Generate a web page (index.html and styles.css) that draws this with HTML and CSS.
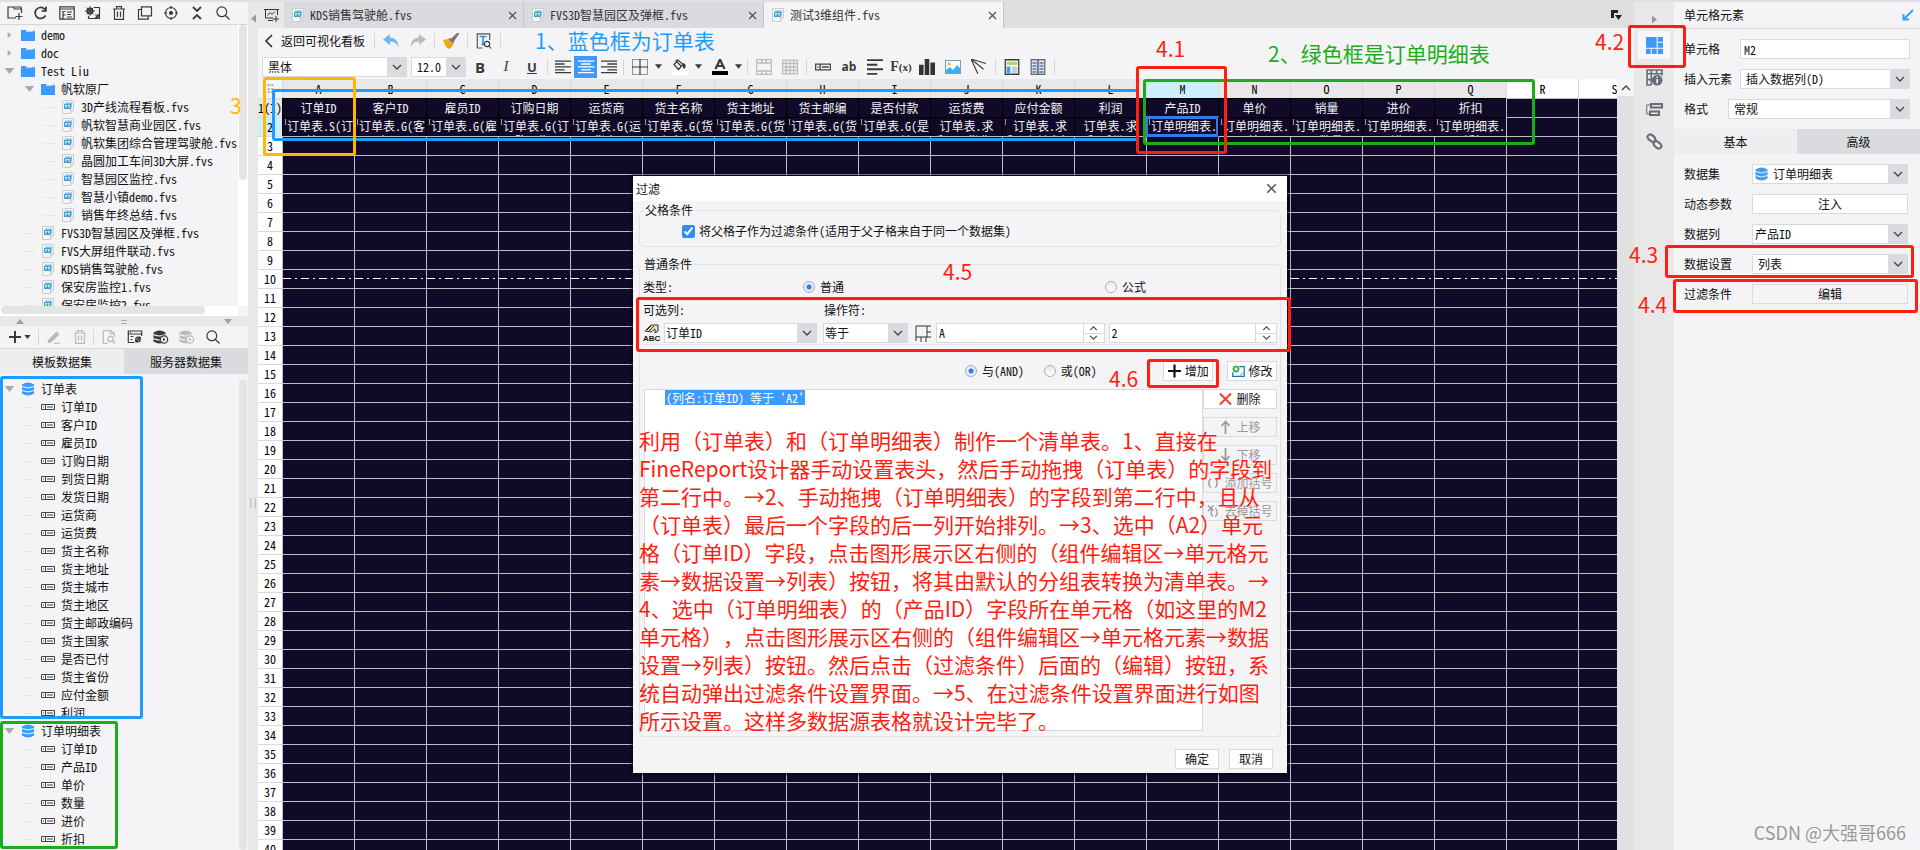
FILE: index.html
```html
<!DOCTYPE html>
<html lang="zh-CN">
<head>
<meta charset="utf-8">
<title>测试3维组件.fvs</title>
<link rel="stylesheet" href="styles.css">
</head>
<body>
<svg class="sprite" aria-hidden="true">
  <symbol id="folder" viewBox="0 0 14 12"><path d="M0 1h5l1 1h8v10H0z" fill="#3d9bff"/><path d="M5 2.5q3 1 9-1" stroke="#bfe0ff" fill="none"/></symbol>
  <symbol id="file" viewBox="0 0 12 14"><path d="M.5.5h11v9l-3 4h-8z" fill="#f4f6f8" stroke="#c9ccd1"/><path d="M11.500 9.500h-3v4" fill="#dfe2e6" stroke="#c9ccd1"/><path d="M3 2.500h7v5H3z" fill="#7cc0ec"/><path d="M2 4h7v5H2z" fill="#3f9fdf"/><path d="M3 5h5v3H3z" fill="#cfeee0"/><path d="M4 8V6.500M5.500 8V5.500M7 8V6.500" stroke="#2aa36a"/></symbol>
  <symbol id="db" viewBox="0 0 13 14"><path d="M.5 2.500Q6.500-1.500 12.500 2.500v9Q6.500 15.500.5 11.500z" fill="#3d9bff"/><path d="M.5 4.500q6 3 12 0M.5 8.500q6 3 12 0" stroke="#f4f4f6" fill="none"/></symbol>
  <symbol id="field" viewBox="0 0 14 6"><path d="M.5.5h13v5H.5zM4.500.5v5M6 3h6M2 3h1" stroke="#444" fill="none"/></symbol>
  <symbol id="down" viewBox="0 0 8 5"><path d="M0 0h8L4 5z"/></symbol>
  <symbol id="right" viewBox="0 0 5 8"><path d="M0 0v8l5-4z"/></symbol>
  <symbol id="chev" viewBox="0 0 10 6"><path d="M1 1l4 4 4-4" fill="none" stroke="#444" stroke-width="1.300"/></symbol>
  <symbol id="chevup" viewBox="0 0 10 6"><path d="M1 5l4-4 4 4" fill="none" stroke="#444" stroke-width="1.300"/></symbol>
  <symbol id="close" viewBox="0 0 9 9"><path d="M1 1l7 7M8 1L1 8" fill="none" stroke="#555" stroke-width="1.300"/></symbol>
  <symbol id="newfolder" viewBox="0 0 16 14"><path d="M9 12H1V1h5l1.500 2H11M7.500 3H14.500v4M5 1h9v2M12 7v7M8.500 10.500h7"/></symbol>
  <symbol id="refresh" viewBox="0 0 16 14"><path d="M12.500 9.500A5.500 5.500 0 1 1 11 2.600l1.500 1.500M13 .5v4.500H8.500" stroke-width="1.700"/></symbol>
  <symbol id="rename" viewBox="0 0 16 14"><path d="M.8.8h14.400v12.400H.8zM.8 3h14.400M4 5v8M4 5.500h2.500M4 9h2.500M8 6h5M8 8.500h4M8 11h5"/></symbol>
  <symbol id="gearfile" viewBox="0 0 16 14"><path d="M9 1.500h5.500v11h-11V10M10 12.500l4-4M10 9h3v3"/><circle cx="5" cy="5" r="2.600" stroke-width="2"/><path d="M5 0v10M0 5h10M1.500 1.500l7 7M8.500 1.500l-7 7" stroke-width=".9"/></symbol>
  <symbol id="trash" viewBox="0 0 14 14"><path d="M1 3h12M4.500 3V.7h5V3M2.500 3v10.300h9V3M5.500 5.500v5.500M8.500 5.500v5.500"/></symbol>
  <symbol id="copy" viewBox="0 0 16 14"><path d="M4.500.8h10v9h-10zM4.500 3.500h-3v9.700h9.700V10"/></symbol>
  <symbol id="target" viewBox="0 0 14 14"><circle cx="7" cy="7" r="5.500"/><circle cx="7" cy="7" r="1.500" fill="currentColor"/><path d="M7 0v3M7 11v3M0 7h3M11 7h3"/></symbol>
  <symbol id="collapse" viewBox="0 0 12 14"><path d="M2 1l4 4 4-4M2 13l4-4 4 4" stroke-width="1.800"/></symbol>
  <symbol id="search" viewBox="0 0 14 14"><circle cx="5.800" cy="5.800" r="4.900"/><path d="M9.500 9.500l4 4"/></symbol>
  <symbol id="plus" viewBox="0 0 12 12"><path d="M6 0v12M0 6h12" stroke-width="2"/></symbol>
  <symbol id="pencil" viewBox="0 0 14 14"><path d="M1 10L9.500 1.500l3 3L4 12.500l-3.500.8z" fill="currentColor" stroke="none"/><path d="M7 13.300h6"/></symbol>
  <symbol id="preview" viewBox="0 0 13 14"><path d="M5 13.300H.8V.7h7.500l3.700 3v3M8 .7V4h4"/><circle cx="8" cy="9" r="2.700"/><path d="M10 11l2.500 2.500"/></symbol>
  <symbol id="sqledit" viewBox="0 0 15 14"><path d="M7 12.500H.8V1h13.400v5M.8 4h13.400M3 6.500h3M3 9.500h2M2.500 2.500h1"/><circle cx="10.500" cy="9.500" r="2.300"/><path d="M8 12l5-5" stroke-width="2"/></symbol>
  <symbol id="dbplay" viewBox="0 0 15 14"><path d="M0 2.500Q6-1.500 12 2.500v9Q6 15.500 0 11.500z" fill="currentColor" stroke="none"/><path d="M0 4.500q6 3 12 0M0 8.500q6 3 12 0" stroke="#f4f4f6"/><circle cx="10.500" cy="9.500" r="3.700" fill="#f4f4f6"/><path d="M9.500 7.800v3.400l2.500-1.700z" fill="currentColor" stroke="none"/></symbol>
  <symbol id="newtab" viewBox="0 0 15 14"><path d="M9 10H1.500V1.500h12V7M0 1.500h15M3.500 7.500l2.500-3 2 2 3-3M4 12.500h5M12 8v6M9 11h6"/></symbol>
  <symbol id="undo" viewBox="0 0 16 14"><path d="M7 0L0 5.500 7 11V7.500q6-.5 8.500 6Q15.500 4 7 3.500z" fill="currentColor" stroke="none"/></symbol>
  <symbol id="brush" viewBox="0 0 16 16"><path d="M15.500 0L9 6l1.500 1.500z" stroke="#777" stroke-width="2"/><path d="M7 5l4 4-1 2-5-5z" fill="#777" stroke="none"/><path d="M5 6l5.500 5.500q-2 4-5.500 4.500Q1 12 0 7z" fill="#f5a817" stroke="none"/></symbol>
  <symbol id="textfind" viewBox="0 0 15 16"><path d="M6 15H.8V.8h12.400V7" stroke="#555"/><path d="M3 3.500h7M6.500 3.500v8M5 11.500h3" stroke="#2f8df0" stroke-width="1.600"/><circle cx="10.500" cy="11" r="2.700"/><path d="M12.500 13l2 2.500"/></symbol>
  <symbol id="al" viewBox="0 0 15 13"><path d="M0 1h15M0 3.700h9M0 6.400h15M0 9.100h9M0 11.800h15"/></symbol>
  <symbol id="ac" viewBox="0 0 15 13"><path d="M0 1h15M3 3.700h9M0 6.400h15M3 9.100h9M0 11.800h15"/></symbol>
  <symbol id="ar" viewBox="0 0 15 13"><path d="M0 1h15M6 3.700h9M0 6.400h15M6 9.100h9M0 11.800h15"/></symbol>
  <symbol id="border" viewBox="0 0 16 16"><path d="M.5.5h15v15H.5z" stroke-dasharray="1 1"/><path d="M8 0v16M0 8h16"/></symbol>
  <symbol id="fill" viewBox="0 0 16 16"><path d="M2 5.500l4-4.500 5 4.500-4.500 5zM5 4V.5M3.500 1.500L9 7"/><path d="M11 4q3 .5 2.500 4.500-1.500 2-2.500 0z" fill="#333" stroke="none"/><path d="M0 12h16v4H0z" fill="#fff" stroke="none"/></symbol>
  <symbol id="fontcolor" viewBox="0 0 16 16"><path d="M3.500 10L8 .5 12.500 10M5 7h6" stroke-width="2.200"/><path d="M0 12h16v4H0z" fill="#000" stroke="none"/></symbol>
  <symbol id="merge" viewBox="0 0 14 14"><path d="M.5.5h13v13H.5zM.5 3.500h13M.5 10.500h13M5 .5v3M9 .5v3M5 10.500v3M9 10.500v3"/></symbol>
  <symbol id="grid-icon" viewBox="0 0 15 14"><path d="M.5.5h14v13H.5zM.5 3.700h14M.5 7h14M.5 10.200h14M4 .5v13M7.500.5v13M11 .5v13"/></symbol>
  <symbol id="para" viewBox="0 0 14 14"><path d="M0 1h14M0 5h9M0 9h14M0 13h9" stroke-width="1.700"/></symbol>
  <symbol id="chart" viewBox="0 0 14 14"><path d="M0 5h4v9H0zM5 0h4v14H5zM10 3h4v11h-4z" fill="#333" stroke="none"/></symbol>
  <symbol id="image" viewBox="0 0 16 14"><path d="M.5.5h15v13H.5z" fill="#fff" stroke="#7a9cb5"/><path d="M1 13V10l4-3 3 3 4-5 3 3v5z" fill="#36b3ee" stroke="none"/><circle cx="4" cy="4" r="1.700" fill="#f5b83d" stroke="none"/></symbol>
  <symbol id="slash" viewBox="0 0 14 14"><path d="M0 0l13 4M0 0l11 9M0 0l6 13" stroke-width="1"/></symbol>
  <symbol id="report" viewBox="0 0 14 15"><path d="M.7.700h12.600v13.600H.7z" fill="#fff"/><path d="M2 2.500h10v3H2z" fill="#a5d86e" stroke="none"/><path d="M2 7h3.500v6H2z" fill="#3d9bff" stroke="none"/><path d="M7 7h5v6H7z" fill="#ccc" stroke="none"/></symbol>
  <symbol id="book" viewBox="0 0 15 16"><path d="M.7.700h13.600v14.600H.7z" fill="#cfe2f8" stroke="#667"/><path d="M7.500 1v14M2 4h4M2 7h4M2 10h4M2 13h4M9 4h4M9 7h4M9 10h4M9 13h4" stroke="#445"/></symbol>
  <symbol id="cells" viewBox="0 0 16 16"><path d="M0 0h10v10H0zM11 0h5v4.500h-5zM11 5.500h5V10h-5zM0 11h4.500v5H0zM5.500 11H10v5H5.500zM11 11h5v5h-5z" fill="#3d9bff" stroke="none"/></symbol>
  <symbol id="cellinfo" viewBox="0 0 16 16"><path d="M5 15H1V1h14v5M1 4.500h14M5 1v14M10 1v4M1 10h5" stroke-width="1.500"/><circle cx="10.500" cy="10.500" r="5" fill="#666c75" stroke="none"/><path d="M10.500 9.500v4M10.500 7v1.300" stroke="#fff" stroke-width="1.500"/></symbol>
  <symbol id="tree" viewBox="0 0 17 13"><path d="M4 2H.7v9H3" stroke-width="1"/><path d="M5 1h11v3.500H5zM4 8.500h9V12H4z" stroke-width="2"/></symbol>
  <symbol id="link" viewBox="0 0 16 16"><path d="M7 9L2.500 6Q0 3 3 1.500 5 .5 8 4q1.500 2 0 4M9 7l4.500 3q2.500 3-.5 4.500-2 1-5-2.500-1.500-2 0-4" stroke-width="2"/></symbol>
  <symbol id="abc" viewBox="0 0 20 20"><path d="M2 8l6-6h7v6l-3 2V6L8 9z" fill="#e9dfb8" stroke="#333"/><path d="M4 7l4-4M6 8l5-5" stroke="#333"/><text x="0" y="18" font-size="8" font-weight="700" fill="#111" stroke="none">ABC</text></symbol>
  <symbol id="cellpos" viewBox="0 0 17 17"><path d="M1 16V1h15M1 12h15M12 1v11M6 12v5M11 12v5M12 7h4"/></symbol>
  <symbol id="greengear" viewBox="0 0 16 15"><path d="M9 2h6v12H1V9" stroke="#1d6fb5" stroke-width="1.500"/><path d="M10 13l4-4" stroke="#1d6fb5"/><circle cx="5" cy="5" r="2.800" stroke="#3dba4e" stroke-width="2.200"/><path d="M5 0v10M0 5h10M1.500 1.500l7 7M8.500 1.500l-7 7" stroke="#3dba4e"/><circle cx="5" cy="5" r="1.500" fill="#fff" stroke="none"/></symbol>
  <symbol id="redx" viewBox="0 0 14 14"><path d="M1 1l12 12M13 1L1 13" stroke="#e8453c" stroke-width="2.300"/></symbol>
  <symbol id="arrup" viewBox="0 0 12 14"><path d="M6 14V2M2 6l4-4.500L10 6" stroke-width="1.800"/></symbol>
  <symbol id="arrdown" viewBox="0 0 12 14"><path d="M6 0v12M2 8l4 4.500L10 8" stroke-width="1.800"/></symbol>
  <symbol id="paren" viewBox="0 0 14 12"><path d="M4 1Q0 6 4 11M9 1q4 5 0 10" stroke-width="1.500"/></symbol>
  <symbol id="unparen" viewBox="0 0 14 14"><path d="M6 4q-3 5 0 9M9 4q4 5 0 9M1 1l6 6M7 1L1 7" stroke-width="1.400"/></symbol>
  <symbol id="popout" viewBox="0 0 11 11"><path d="M0 0h7v3H3v5H0z" fill="#222" stroke="none"/><path d="M4 5h7l-3.500 5z" fill="#222" stroke="none"/></symbol>
</svg>

<div class="app">
  <aside class="left">
    <div class="bar">
      <button class="tool" aria-label="新建文件夹"><svg><use href="#newfolder"/></svg></button>
      <button class="tool" aria-label="刷新"><svg><use href="#refresh"/></svg></button>
      <button class="tool" aria-label="重命名"><svg><use href="#rename"/></svg></button>
      <button class="tool" aria-label="设置"><svg><use href="#gearfile"/></svg></button>
      <button class="tool" aria-label="删除"><svg><use href="#trash"/></svg></button>
      <button class="tool" aria-label="复制"><svg><use href="#copy"/></svg></button>
      <button class="tool" aria-label="定位"><svg><use href="#target"/></svg></button>
      <button class="tool" aria-label="收起"><svg><use href="#collapse"/></svg></button>
      <button class="tool" aria-label="搜索"><svg><use href="#search"/></svg></button>
    </div>
    <div class="scroller files">
      <ul class="tree">
        <li class="d0"><svg class="tw"><use href="#right"/></svg><svg class="ic"><use href="#folder"/></svg>demo</li>
        <li class="d0"><svg class="tw"><use href="#right"/></svg><svg class="ic"><use href="#folder"/></svg>doc</li>
        <li class="d0"><svg class="tw"><use href="#down"/></svg><svg class="ic"><use href="#folder"/></svg>Test Liu</li>
        <li class="d1"><svg class="tw"><use href="#down"/></svg><svg class="ic"><use href="#folder"/></svg>帆软原厂</li>
        <li class="d2"><i></i><svg class="ic"><use href="#file"/></svg>3D产线流程看板.fvs</li>
        <li class="d2"><i></i><svg class="ic"><use href="#file"/></svg>帆软智慧商业园区.fvs</li>
        <li class="d2"><i></i><svg class="ic"><use href="#file"/></svg>帆软集团综合管理驾驶舱.fvs</li>
        <li class="d2"><i></i><svg class="ic"><use href="#file"/></svg>晶圆加工车间3D大屏.fvs</li>
        <li class="d2"><i></i><svg class="ic"><use href="#file"/></svg>智慧园区监控.fvs</li>
        <li class="d2"><i></i><svg class="ic"><use href="#file"/></svg>智慧小镇demo.fvs</li>
        <li class="d2"><i></i><svg class="ic"><use href="#file"/></svg>销售年终总结.fvs</li>
        <li class="d1"><i></i><svg class="ic"><use href="#file"/></svg>FVS3D智慧园区及弹框.fvs</li>
        <li class="d1"><i></i><svg class="ic"><use href="#file"/></svg>FVS大屏组件联动.fvs</li>
        <li class="d1"><i></i><svg class="ic"><use href="#file"/></svg>KDS销售驾驶舱.fvs</li>
        <li class="d1"><i></i><svg class="ic"><use href="#file"/></svg>保安房监控1.fvs</li>
        <li class="d1"><i></i><svg class="ic"><use href="#file"/></svg>保安房监控2.fvs</li>
      </ul>
      <div class="vtrack"><div class="vthumb"></div></div>
    </div>
    <div class="htrack"><div class="hthumb"></div><div class="corner"></div></div>
    <div class="hsplit"><svg class="flip"><use href="#down"/></svg><span>=</span><svg><use href="#down"/></svg></div>
    <div class="bar data-bar">
      <button class="tool add" aria-label="新增"><svg class="plus"><use href="#plus"/></svg><svg class="caret"><use href="#down"/></svg></button>
      <span class="sep"></span>
      <button class="tool off" aria-label="编辑"><svg><use href="#pencil"/></svg></button>
      <button class="tool off" aria-label="删除"><svg><use href="#trash"/></svg></button>
      <span class="sep"></span>
      <button class="tool off" aria-label="预览"><svg><use href="#preview"/></svg></button>
      <button class="tool" aria-label="连接"><svg><use href="#sqledit"/></svg></button>
      <button class="tool" aria-label="运行"><svg><use href="#dbplay"/></svg></button>
      <button class="tool off" aria-label="停止"><svg><use href="#dbplay"/></svg></button>
      <button class="tool" aria-label="搜索"><svg><use href="#search"/></svg></button>
    </div>
    <div class="tabs2"><button class="on">模板数据集</button><button>服务器数据集</button></div>
    <div class="scroller data">
      <ul class="tree">
        <li class="d0"><svg class="tw"><use href="#down"/></svg><svg class="ic"><use href="#db"/></svg>订单表</li>
        <li class="d1"><i></i><svg class="ic"><use href="#field"/></svg>订单ID</li>
        <li class="d1"><i></i><svg class="ic"><use href="#field"/></svg>客户ID</li>
        <li class="d1"><i></i><svg class="ic"><use href="#field"/></svg>雇员ID</li>
        <li class="d1"><i></i><svg class="ic"><use href="#field"/></svg>订购日期</li>
        <li class="d1"><i></i><svg class="ic"><use href="#field"/></svg>到货日期</li>
        <li class="d1"><i></i><svg class="ic"><use href="#field"/></svg>发货日期</li>
        <li class="d1"><i></i><svg class="ic"><use href="#field"/></svg>运货商</li>
        <li class="d1"><i></i><svg class="ic"><use href="#field"/></svg>运货费</li>
        <li class="d1"><i></i><svg class="ic"><use href="#field"/></svg>货主名称</li>
        <li class="d1"><i></i><svg class="ic"><use href="#field"/></svg>货主地址</li>
        <li class="d1"><i></i><svg class="ic"><use href="#field"/></svg>货主城市</li>
        <li class="d1"><i></i><svg class="ic"><use href="#field"/></svg>货主地区</li>
        <li class="d1"><i></i><svg class="ic"><use href="#field"/></svg>货主邮政编码</li>
        <li class="d1"><i></i><svg class="ic"><use href="#field"/></svg>货主国家</li>
        <li class="d1"><i></i><svg class="ic"><use href="#field"/></svg>是否已付</li>
        <li class="d1"><i></i><svg class="ic"><use href="#field"/></svg>货主省份</li>
        <li class="d1"><i></i><svg class="ic"><use href="#field"/></svg>应付金额</li>
        <li class="d1"><i></i><svg class="ic"><use href="#field"/></svg>利润</li>
        <li class="d0"><svg class="tw"><use href="#down"/></svg><svg class="ic"><use href="#db"/></svg>订单明细表</li>
        <li class="d1"><i></i><svg class="ic"><use href="#field"/></svg>订单ID</li>
        <li class="d1"><i></i><svg class="ic"><use href="#field"/></svg>产品ID</li>
        <li class="d1"><i></i><svg class="ic"><use href="#field"/></svg>单价</li>
        <li class="d1"><i></i><svg class="ic"><use href="#field"/></svg>数量</li>
        <li class="d1"><i></i><svg class="ic"><use href="#field"/></svg>进价</li>
        <li class="d1"><i></i><svg class="ic"><use href="#field"/></svg>折扣</li>
      </ul>
      <div class="vtrack"><div class="vthumb"></div></div>
    </div>
  </aside>
  <div class="vsplit"><svg><use href="#right"/></svg><span>||</span></div>

  <main class="main">
    <div class="filetabs">
      <button class="newtab" aria-label="新建"><svg><use href="#newtab"/></svg></button>
      <div class="ftab"><svg class="ic"><use href="#file"/></svg><span>KDS销售驾驶舱.fvs</span><button aria-label="关闭"><svg><use href="#close"/></svg></button></div>
      <div class="ftab"><svg class="ic"><use href="#file"/></svg><span>FVS3D智慧园区及弹框.fvs</span><button aria-label="关闭"><svg><use href="#close"/></svg></button></div>
      <div class="ftab on"><svg class="ic"><use href="#file"/></svg><span>测试3维组件.fvs</span><button aria-label="关闭"><svg><use href="#close"/></svg></button></div>
      <svg class="popout"><use href="#popout"/></svg>
    </div>
    <div class="row1">
      <button class="back"><svg><path d="M7 1L1 7l6 6"/></svg>返回可视化看板</button>
      <span class="sep"></span>
      <button class="tool blue" aria-label="撤销"><svg><use href="#undo"/></svg></button>
      <button class="tool off mirror" aria-label="重做"><svg><use href="#undo"/></svg></button>
      <span class="sep"></span>
      <button class="tool" aria-label="格式刷"><svg><use href="#brush"/></svg></button>
      <span class="sep"></span>
      <button class="tool" aria-label="查找"><svg><use href="#textfind"/></svg></button>
      <span class="sep"></span>
    </div>
    <div class="row2">
      <div class="combo font"><select aria-label="字体"><option>黑体</option></select><span><svg><use href="#chev"/></svg></span></div>
      <div class="combo size"><select aria-label="字号"><option>12.0</option></select><span><svg><use href="#chev"/></svg></span></div>
      <button class="tool bold">B</button><button class="tool ital">I</button><button class="tool under">U</button>
      <span class="sep"></span>
      <button class="tool al" aria-label="左对齐"><svg><use href="#al"/></svg></button><button class="tool al on" aria-label="居中"><svg><use href="#ac"/></svg></button><button class="tool al" aria-label="右对齐"><svg><use href="#ar"/></svg></button>
      <span class="sep"></span>
      <button class="tool wide" aria-label="边框"><svg><use href="#border"/></svg><svg class="caret"><use href="#down"/></svg></button>
      <button class="tool wide" aria-label="填充"><svg><use href="#fill"/></svg><svg class="caret"><use href="#down"/></svg></button>
      <button class="tool wide" aria-label="字色"><svg><use href="#fontcolor"/></svg><svg class="caret"><use href="#down"/></svg></button>
      <span class="sep"></span>
      <button class="tool off" aria-label="合并"><svg><use href="#merge"/></svg></button><button class="tool off" aria-label="拆分"><svg><use href="#grid-icon"/></svg></button>
      <span class="sep"></span>
      <button class="tool" aria-label="数据列"><svg><use href="#field"/></svg></button><button class="tool ab">ab</button><button class="tool" aria-label="富文本"><svg><use href="#para"/></svg></button><button class="tool fx">F<small>(x)</small></button><button class="tool" aria-label="图表"><svg><use href="#chart"/></svg></button><button class="tool" aria-label="图片"><svg><use href="#image"/></svg></button><button class="tool" aria-label="斜线"><svg><use href="#slash"/></svg></button>
      <span class="sep"></span>
      <button class="tool" aria-label="子报表"><svg><use href="#report"/></svg></button><button class="tool" aria-label="分栏"><svg><use href="#book"/></svg></button>
      <span class="sep"></span>
    </div>
    <div class="sheetwrap">
      <div class="sheet">
        <table class="grid" id="grid">
          <thead>
            <tr><th class="rh">⠿</th><th>A</th><th>B</th><th>C</th><th>D</th><th>E</th><th>F</th><th>G</th><th>H</th><th>I</th><th>J</th><th>K</th><th>L</th><th class="sel">M</th><th>N</th><th>O</th><th>P</th><th>Q</th><th class="free">R</th><th class="free">S</th></tr>
          </thead>
          <tbody>
            <tr class="head"><th class="rh">1(I)</th><td>订单ID</td><td>客户ID</td><td>雇员ID</td><td>订购日期</td><td>运货商</td><td>货主名称</td><td>货主地址</td><td>货主邮编</td><td>是否付款</td><td>运货费</td><td>应付金额</td><td>利润</td><td>产品ID</td><td>单价</td><td>销量</td><td>进价</td><td>折扣</td><td class="free"></td><td class="free"></td></tr>
            <tr class="bind"><th class="rh">2</th>
              <td class="ex"><div>订单表.S(订<br>单ID)</div></td><td class="ex"><div>订单表.G(客<br>户ID)</div></td><td class="ex"><div>订单表.G(雇<br>员ID)</div></td><td class="ex"><div>订单表.G(订<br>购日期)</div></td><td class="ex"><div>订单表.G(运<br>货商)</div></td><td class="ex"><div>订单表.G(货<br>主名称)</div></td><td class="ex"><div>订单表.G(货<br>主地址)</div></td><td class="ex"><div>订单表.G(货<br>主邮编)</div></td><td class="ex"><div>订单表.G(是<br>否已付)</div></td><td><div>订单表.求<br>和(运货费)</div></td><td class="ex"><div>订单表.求<br>和(应付金额)</div></td><td><div>订单表.求<br>和(利润)</div></td><td class="ex cur"><div>订单明细表.<br>G(产品ID)</div></td><td class="ex"><div>订单明细表.<br>G(单价)</div></td><td class="ex"><div>订单明细表.<br>G(数量)</div></td><td class="ex"><div>订单明细表.<br>G(进价)</div></td><td class="ex"><div>订单明细表.<br>G(折扣)</div></td><td class="free"></td><td class="free"></td></tr>
          </tbody>
        </table>
      </div>
      <div class="sheetbar"><button aria-label="向上滚动"><svg><use href="#chevup"/></svg></button></div>
    </div>
  </main>

  <nav class="strip">
    <svg class="tri"><use href="#right"/></svg>
    <button class="on" aria-label="单元格元素"><svg><use href="#cells"/></svg></button>
    <button aria-label="单元格属性"><svg><use href="#cellinfo"/></svg></button>
    <button aria-label="组件"><svg><use href="#tree"/></svg></button>
    <button aria-label="超级链接"><svg><use href="#link"/></svg></button>
  </nav>
  <aside class="right">
    <header><span>单元格元素</span><svg><path d="M11 1L2 10M1.500 5v5.500H7" fill="none" stroke="#3d9bff" stroke-width="2"/></svg></header>
    <div class="form top">
      <div class="line"><label for="cell">单元格</label><input id="cell" value="M2"></div>
      <div class="line"><label for="ins">插入元素</label><div class="combo"><select id="ins"><option>插入数据列(D)</option></select><span><svg><use href="#chev"/></svg></span></div></div>
      <div class="line short"><label for="fmt">格式</label><div class="combo"><select id="fmt"><option>常规</option></select><span><svg><use href="#chev"/></svg></span></div></div>
    </div>
    <div class="tabs2"><button class="on">基本</button><button>高级</button></div>
    <div class="form low">
      <div class="line"><label for="ds">数据集</label><div class="combo"><svg class="dbi"><use href="#db"/></svg><select id="ds"><option>订单明细表</option></select><span><svg><use href="#chev"/></svg></span></div></div>
      <div class="line"><span class="lbl">动态参数</span><button class="btn">注入</button></div>
      <div class="line"><label for="col">数据列</label><div class="combo tight"><select id="col"><option>产品ID</option></select><span><svg><use href="#chev"/></svg></span></div></div>
      <div class="line"><label for="set">数据设置</label><div class="combo"><select id="set"><option>列表</option></select><span><svg><use href="#chev"/></svg></span></div></div>
      <div class="line"><span class="lbl">过滤条件</span><button class="btn flat">编辑</button></div>
    </div>
  </aside>
</div>

<section class="dialog" role="dialog" aria-label="过滤">
  <header><span>过滤</span><button aria-label="关闭"><svg viewBox="0 0 9 9"><use href="#close"/></svg></button></header>
  <div class="dbody">
    <fieldset class="parent"><legend>父格条件</legend>
      <label><input type="checkbox" checked>将父格子作为过滤条件(适用于父子格来自于同一个数据集)</label>
    </fieldset>
    <fieldset class="normal"><legend>普通条件</legend>
      <div class="kind"><span>类型:</span><label><input type="radio" name="kind" checked>普通</label><label><input type="radio" name="kind">公式</label></div>
      <div class="cond">
        <div class="caps"><label for="c1">可选列:</label><label for="c2">操作符:</label></div>
        <div class="ctl">
          <svg class="abc"><use href="#abc"/></svg>
          <div class="combo c1"><select id="c1"><option>订单ID</option></select><span><svg><use href="#chev"/></svg></span></div>
          <div class="combo c2"><select id="c2"><option>等于</option></select><span><svg><use href="#chev"/></svg></span></div>
          <svg class="pos"><use href="#cellpos"/></svg>
          <div class="spin"><input aria-label="列" value="A"><div><button aria-label="增"><svg><use href="#chevup"/></svg></button><button aria-label="减"><svg><use href="#chev"/></svg></button></div></div>
          <div class="spin"><input aria-label="行" value="2"><div><button aria-label="增"><svg><use href="#chevup"/></svg></button><button aria-label="减"><svg><use href="#chev"/></svg></button></div></div>
        </div>
      </div>
      <div class="join"><label><input type="radio" name="join" checked>与(AND)</label><label><input type="radio" name="join">或(OR)</label>
        <button class="btn"><svg><use href="#plus"/></svg>增加</button><button class="btn"><svg><use href="#greengear"/></svg>修改</button></div>
      <div class="listrow">
        <div class="list"><span>(列名:订单ID) 等于 'A2'</span></div>
        <div class="side">
          <button class="btn"><svg><use href="#redx"/></svg>删除</button>
          <button class="btn" disabled><svg><use href="#arrup"/></svg>上移</button>
          <button class="btn" disabled><svg><use href="#arrdown"/></svg>下移</button>
          <button class="btn" disabled><svg><use href="#paren"/></svg>添加括号</button>
          <button class="btn" disabled><svg><use href="#unparen"/></svg>去掉括号</button>
        </div>
      </div>
    </fieldset>
    <footer><button class="btn">确定</button><button class="btn">取消</button></footer>
  </div>
</section>

<div class="box blue b-tree"></div>
<div class="box green g-tree"></div>
<div class="box blue b-cols"></div>
<div class="box yellow y-a"></div>
<div class="box green g-cols"></div>
<div class="box red r41"></div>
<div class="box red r42"></div>
<div class="box red r43"></div>
<div class="box red r44"></div>
<div class="box red r45"></div>
<div class="box red r46"></div>
<p class="note blue n1">1、蓝色框为订单表</p>
<p class="note green n2">2、绿色框是订单明细表</p>
<p class="note yellow n3">3</p>
<p class="note red n41">4.1</p>
<p class="note red n42">4.2</p>
<p class="note red n43">4.3</p>
<p class="note red n44">4.4</p>
<p class="note red n45">4.5</p>
<p class="note red n46">4.6</p>
<p class="note red steps">利用（订单表）和（订单明细表）制作一个清单表。1、直接在<br>FineReport设计器手动设置表头，然后手动拖拽（订单表）的字段到<br>第二行中。→2、手动拖拽（订单明细表）的字段到第二行中，且从<br>（订单表）最后一个字段的后一列开始排列。→3、选中（A2）单元<br>格（订单ID）字段，点击图形展示区右侧的（组件编辑区→单元格元<br>素→数据设置→列表）按钮，将其由默认的分组表转换为清单表。→<br>4、选中（订单明细表）的（产品ID）字段所在单元格（如这里的M2<br>单元格），点击图形展示区右侧的（组件编辑区→单元格元素→数据<br>设置→列表）按钮。然后点击（过滤条件）后面的（编辑）按钮，系<br>统自动弹出过滤条件设置界面。→5、在过滤条件设置界面进行如图<br>所示设置。这样多数据源表格就设计完毕了。</p>
<p class="mark">CSDN @大强哥666</p>
<script src="script.js"></script>
</body>
</html>
```

FILE: styles.css
```css
* { box-sizing: border-box; }
html, body { height: 100%; }
body { margin: 0; position: relative; overflow: hidden; background: #f4f4f6; color: #111; font: 12px/18px "Noto Sans Mono CJK SC", "Noto Sans CJK SC", sans-serif; text-spacing-trim: space-all; }
button, input, select { font: inherit; color: inherit; margin: 0; padding: 0; border: 0; background: none; border-radius: 0; outline: 0; }
select { appearance: none; }
ul, p { margin: 0; padding: 0; list-style: none; }
svg { display: block; flex: none; }
.sprite { position: absolute; width: 0; height: 0; }
.app { display: flex; height: 100%; border-top: 2px solid #e0e0e2; }
.tool { display: flex; align-items: center; justify-content: center; width: 26px; height: 22px; color: #3a3a3a; }
.tool svg { width: 16px; height: 14px; fill: none; stroke: currentColor; stroke-width: 1.2; }
.tool.off { color: #bbb; }
.sep { width: 1px; height: 16px; background: #d6d6d8; flex: none; }
.tool svg.caret { width: 7px; height: 4px; fill: currentColor; stroke: none; }

.left { width: 248px; flex: none; display: flex; flex-direction: column; }
.bar { display: flex; align-items: center; height: 23px; padding-left: 2px; border-bottom: 1px solid #d6d6d8; flex: none; }
.scroller { display: flex; overflow: hidden; }
.files { height: 281px; flex: none; }
.data { flex: 1; min-height: 0; padding-top: 5px; }
.tree { flex: 1; padding-top: 1px; min-width: 0; white-space: nowrap; }
.tree li { display: flex; align-items: center; height: 18px; gap: 6px; padding-left: 4px; }
.tree .d1 { padding-left: 24px; }
.tree .d2 { padding-left: 44px; }
.tree i { width: 11px; height: 1px; background: #e6e6e9; }
.tree .tw { width: 11px; height: 6px; fill: #a9a9a9; }
.tree .ic { width: 14px; height: 14px; }
.vtrack { width: 10px; background: #fff; padding: 0 1px; flex: none; }
.vthumb { height: 155px; border-radius: 4px; background: #e4e4e4; }
.data .vtrack { background: #f4f4f6; }
.data .vthumb { height: 100%; }
.htrack { display: flex; justify-content: space-between; height: 10px; background: #fff; flex: none; padding-left: 1px; }
.hthumb { width: 204px; height: 8px; border-radius: 4px; background: #e4e4e4; }
.corner { width: 10px; background: #f4f4f6; }
.hsplit { display: flex; align-items: center; justify-content: space-between; height: 10px; padding: 0 16px; background: #e8e8e8; color: #999; flex: none; line-height: 10px; }
.hsplit svg { width: 8px; height: 5px; fill: #a0a0a0; }
.flip { transform: rotate(180deg); }
.data-bar .add { width: 36px; gap: 3px; }
.data-bar .add .plus { width: 12px; height: 12px; }
.data-bar .sep + .tool { margin-left: 2px; }
.tabs2 { display: flex; height: 25px; flex: none; background: #eeeef0; }
.tabs2 button { flex: 1; background: #dadbde; }
.tabs2 .on { background: #eeeef0; }
.vsplit { width: 10px; flex: none; background: #e8e8e8; display: flex; flex-direction: column; align-items: center; gap: 471px; padding-top: 12px; font-size: 9px; color: #999; }
.vsplit svg { width: 5px; height: 9px; fill: #999; transform: rotate(180deg); }

.main { flex: 1; min-width: 0; display: flex; flex-direction: column; }
.filetabs { display: flex; height: 26px; background: #dfdfe1; flex: none; }
.newtab { width: 26px; background: #e8e8e8; display: flex; align-items: center; justify-content: center; }
.newtab svg { width: 15px; height: 14px; fill: none; stroke: #333; }
.ftab { display: flex; align-items: center; gap: 6px; width: 240px; padding: 0 6px 0 8px; background: #dadbde; color: #333; border-right: 1px solid #c6c6c9; }
.ftab.on { background: #f4f4f6; }
.ftab .ic { width: 12px; height: 14px; }
.ftab span { flex: 1; }
.ftab button svg { width: 9px; height: 9px; }
.popout { width: 11px; height: 11px; margin: 8px 12px 0 auto; }
.row1 { display: flex; align-items: center; height: 26px; padding-left: 7px; flex: none; }
.row1 .tool { margin: 0 3px; }
.row1 .tool svg { width: 16px; height: 16px; }
.row1 .blue + .tool { margin-left: -2px; }
.back { display: flex; align-items: center; gap: 8px; padding-right: 9px; }
.back svg { width: 8px; height: 14px; fill: none; stroke: #222; stroke-width: 1.5; }
.tool.blue { color: #75b4f3; }
.mirror svg { transform: scaleX(-1); }
.row2 { display: flex; align-items: center; height: 25px; padding-left: 4px; flex: none; }
.combo { display: flex; align-items: center; height: 20px; border: 1px solid #d9dade; background: #fff; min-width: 0; }
.combo select { flex: 1; min-width: 0; height: 18px; padding-left: 5px; }
.combo.tight select { padding-left: 2px; }
.combo > span { width: 19px; height: 18px; background: #dadbde; display: flex; align-items: center; justify-content: center; flex: none; }
.combo > span svg { width: 10px; height: 6px; }
.combo.font { width: 145px; margin-right: 4px; }
.combo.size { width: 55px; margin-right: 1px; }
.row2 .tool svg { height: 16px; width: 16px; }
.row2 .tool svg.caret { width: 7px; height: 5px; }
.bold { font: 700 15px "Open Sans", sans-serif; }
.ital { font: italic 15px "Liberation Serif", serif; }
.under { font: 700 13px "Open Sans", sans-serif; text-decoration: underline; }
.row2 .sep { margin: 0 3px; }
.row2 .under + .sep { margin-left: 2px; }
.tool.al { width: 23px; }
.tool.al.on { background: #3d9bff; color: #fff; }
.tool.wide { width: 40px; gap: 7px; }
.row2 .wide + .sep { margin-left: 0; }
.ab { font: 700 12px "Open Sans", sans-serif; }
.fx { font: 700 14px "Liberation Serif", serif; }
.fx small { font-size: 11px; }
.sheetwrap { flex: 1; min-height: 0; display: flex; }
.sheet { flex: 1; overflow: hidden; background: #100a28; }
.sheetbar { width: 17px; background: #e1e1e1; flex: none; }
.sheetbar button { width: 17px; height: 17px; background: #f4f4f6; display: flex; align-items: center; justify-content: center; }
.sheetbar svg { width: 10px; height: 6px; }
.grid { border-collapse: separate; border-spacing: 0; table-layout: fixed; width: 1392px; }
.grid th, .grid td { padding: 0; height: 19px; line-height: 18px; border-left: 1px solid #bdbdc2; border-top: 1px solid #bdbdc2; text-align: center; font-weight: 400; overflow: hidden; white-space: nowrap; }
.grid th { background: #fff; color: #000; border-color: #d9dade; }
.grid thead th { background: #e8e8e8; border-top: 0; }
.grid .rh { width: 24px; border-left: 0; }
.grid thead .rh { color: #999; background: #f4f4f6; }
.grid thead .sel, .grid .bind .rh { background: #cdeefb; }
.grid thead .free { background: #fff; }
.grid .head .rh { background: #e8e8e8; }
.head td, .bind td { background: #100a28; color: #f2f2f2; border-color: #000; }
.head td.free, .bind td.free { border-color: #bdbdc2; }
.bind td { position: relative; }
.bind div { height: 18px; overflow: hidden; line-height: 15px; }
.bind .ex div { padding-left: 3px; }
.bind .ex::before { content: ""; position: absolute; left: 2px; top: 1px; width: 1px; height: 6px; background: #999; }
.bind .cur { outline: 3px solid #2f7de8; outline-offset: -2px; }
.fold td { background: repeating-linear-gradient(90deg, #fff 0 8px, transparent 8px 12px, #fff 12px 14px, transparent 14px 18px) 0 8px / 100% 1px no-repeat; }

.strip { width: 40px; flex: none; background: #e8e8e8; display: flex; flex-direction: column; align-items: center; gap: 4px; padding-top: 13px; }
.strip .tri { width: 5px; height: 9px; fill: #999; margin-bottom: 3px; }
.strip button { width: 32px; height: 28px; display: flex; align-items: center; justify-content: center; color: #666c75; }
.strip .on { background: #f7f7f9; }
.strip button svg { width: 17px; height: 17px; fill: none; stroke: currentColor; }
.right { width: 246px; flex: none; }
.right > header { display: flex; align-items: center; justify-content: space-between; height: 27px; padding: 0 6px 0 10px; border-bottom: 1px solid #d6d6d8; }
.right > header svg { width: 12px; height: 12px; }
.form { display: flex; flex-direction: column; gap: 10px; padding: 10px; }
.form.low { padding-right: 12px; }
.line { display: flex; align-items: center; height: 20px; }
.line label, .lbl { width: 56px; flex: none; }
.short label { width: 44px; }
.low label, .low .lbl { width: 68px; }
.line .combo, .line > input, .line .btn { flex: 1; }
.line > input { height: 20px; min-width: 0; border: 1px solid #d9dade; background: #fff; padding-left: 3px; }
.dbi { width: 13px; height: 14px; margin-left: 2px; }
.btn { height: 20px; border: 1px solid #d9dade; background: #fff; display: inline-flex; align-items: center; justify-content: center; gap: 4px; white-space: nowrap; }
.btn.flat { background: #f4f4f6; }
.btn svg { width: 13px; height: 14px; fill: none; stroke: currentColor; }
.btn:disabled { color: #999; background: #f4f4f6; }

.dialog { position: absolute; left: 633px; top: 176px; width: 654px; background: #f4f4f6; box-shadow: 0 0 3px 1px #05030f; }
.dialog > header { display: flex; align-items: center; justify-content: space-between; height: 25px; background: #fff; padding: 0 10px 0 3px; }
.dialog > header svg { width: 11px; height: 11px; }
.dbody { padding: 0 6px 4px; }
fieldset { margin: 0; border: 1px solid #e3e3e6; border-radius: 5px; padding: 0 4px; min-width: 0; }
legend { padding: 0 2px; margin-left: -1px; line-height: 18px; }
.parent { height: 46px; }
.parent label { display: flex; align-items: center; gap: 4px; padding-left: 38px; height: 24px; }
.parent input { width: 13px; height: 13px; accent-color: #2f8df0; }
.normal { margin-top: 8px; padding: 0 3px 5px; }
.kind { display: grid; grid-template-columns: 160px 302px 1fr; align-items: center; height: 28px; border-bottom: 1px solid #e3e3e6; }
.kind label, .join label { display: flex; align-items: center; gap: 5px; }
input[type=radio] { appearance: none; width: 12px; height: 12px; border: 1px solid #a9adb3; border-radius: 50%; background: linear-gradient(#e9e9ea, #fff); }
input[type=radio]:checked { background: radial-gradient(circle, #2f7de8 0 2px, #e4eefb 3px); }
.cond { border-bottom: 1px solid #e3e3e6; height: 44px; }
.caps { display: grid; grid-template-columns: 181px 1fr; height: 22px; }
.ctl { display: flex; align-items: center; }
.ctl .abc { width: 20px; height: 20px; margin-right: 1px; fill: none; font-family: "Liberation Sans", sans-serif; }
.ctl .c1 { width: 153px; margin-right: 6px; }
.ctl .c2 { width: 85px; margin-right: 7px; }
.ctl select { padding-left: 1px; }
.pos { width: 17px; height: 17px; margin-right: 4px; fill: none; stroke: #333; }
.spin { display: flex; flex: 1; height: 20px; border: 1px solid #d9dade; background: #fff; min-width: 0; }
.spin + .spin { margin-left: 4px; }
.spin input { flex: 1; min-width: 0; width: 20px; padding-left: 2px; }
.spin > div { width: 21px; border-left: 1px solid #d9dade; display: flex; flex-direction: column; }
.spin button { flex: 1; display: flex; align-items: center; justify-content: center; }
.spin button + button { border-top: 1px solid #d9dade; }
.spin svg { width: 9px; height: 5px; }
.join { display: flex; align-items: center; height: 36px; margin-top: 8px; padding-left: 322px; }
.join label { width: 79px; }
.join label + label { width: 120px; }
.join .btn { width: 50px; }
.join .btn + .btn { margin-left: 14px; }
.listrow { display: flex; height: 342px; padding-left: 1px; }
.list { flex: 1; border: 1px solid #d9dade; background: #fff; padding-left: 20px; line-height: 15px; }
.list span { display: inline-block; background: #3d9bff; color: #fff; padding: 0 1px; }
.side { width: 74px; display: flex; flex-direction: column; gap: 8px; }
.dbody footer { display: flex; justify-content: flex-end; gap: 10px; padding: 12px 8px 0; }
.dbody footer .btn { width: 44px; }

.box { position: absolute; border: 3px solid; border-radius: 3px; pointer-events: none; }
.blue { color: #1e9bff; }
.green { color: #1aad19; }
.yellow { color: #ffb800; }
.red { color: #ff1e10; }
.b-tree { left: 0; top: 376px; width: 143px; height: 343px; }
.g-tree { left: 0; top: 721px; width: 118px; height: 128px; }
.b-cols { left: 272px; top: 89px; width: 867px; height: 52px; }
.y-a { left: 263px; top: 77px; width: 93px; height: 79px; }
.g-cols { left: 1143px; top: 79px; width: 392px; height: 66px; }
.r41 { left: 1136px; top: 66px; width: 91px; height: 88px; }
.r42 { left: 1628px; top: 25px; width: 58px; height: 43px; }
.r43 { left: 1665px; top: 245px; width: 249px; height: 33px; }
.r44 { left: 1673px; top: 279px; width: 245px; height: 34px; }
.r45 { left: 636px; top: 297px; width: 655px; height: 55px; }
.r46 { left: 1147px; top: 359px; width: 72px; height: 29px; }
.note { position: absolute; font: 21px/28px "Noto Sans CJK SC", sans-serif; white-space: nowrap; pointer-events: none; }
.n1 { left: 535px; top: 26px; }
.n2 { left: 1268px; top: 39px; }
.n3 { left: 230px; top: 91px; }
.n41 { left: 1156px; top: 34px; }
.n42 { left: 1595px; top: 27px; }
.n43 { left: 1629px; top: 240px; }
.n44 { left: 1638px; top: 290px; }
.n45 { left: 943px; top: 257px; }
.n46 { left: 1109px; top: 364px; }
.steps { left: 639px; top: 426px; }
.mark { position: absolute; right: 14px; bottom: 6px; font: 18px/24px "Noto Sans CJK SC", sans-serif; color: #999; }
```

FILE: script.js
```js
const body = document.querySelector('#grid tbody');
for (let n = 3; n <= 40; n++) {
  const row = body.insertRow();
  if (n === 10) row.className = 'fold';
  const head = document.createElement('th');
  head.className = 'rh';
  head.textContent = n;
  row.append(head);
  for (let c = 0; c < 19; c++) row.insertCell();
}
```
